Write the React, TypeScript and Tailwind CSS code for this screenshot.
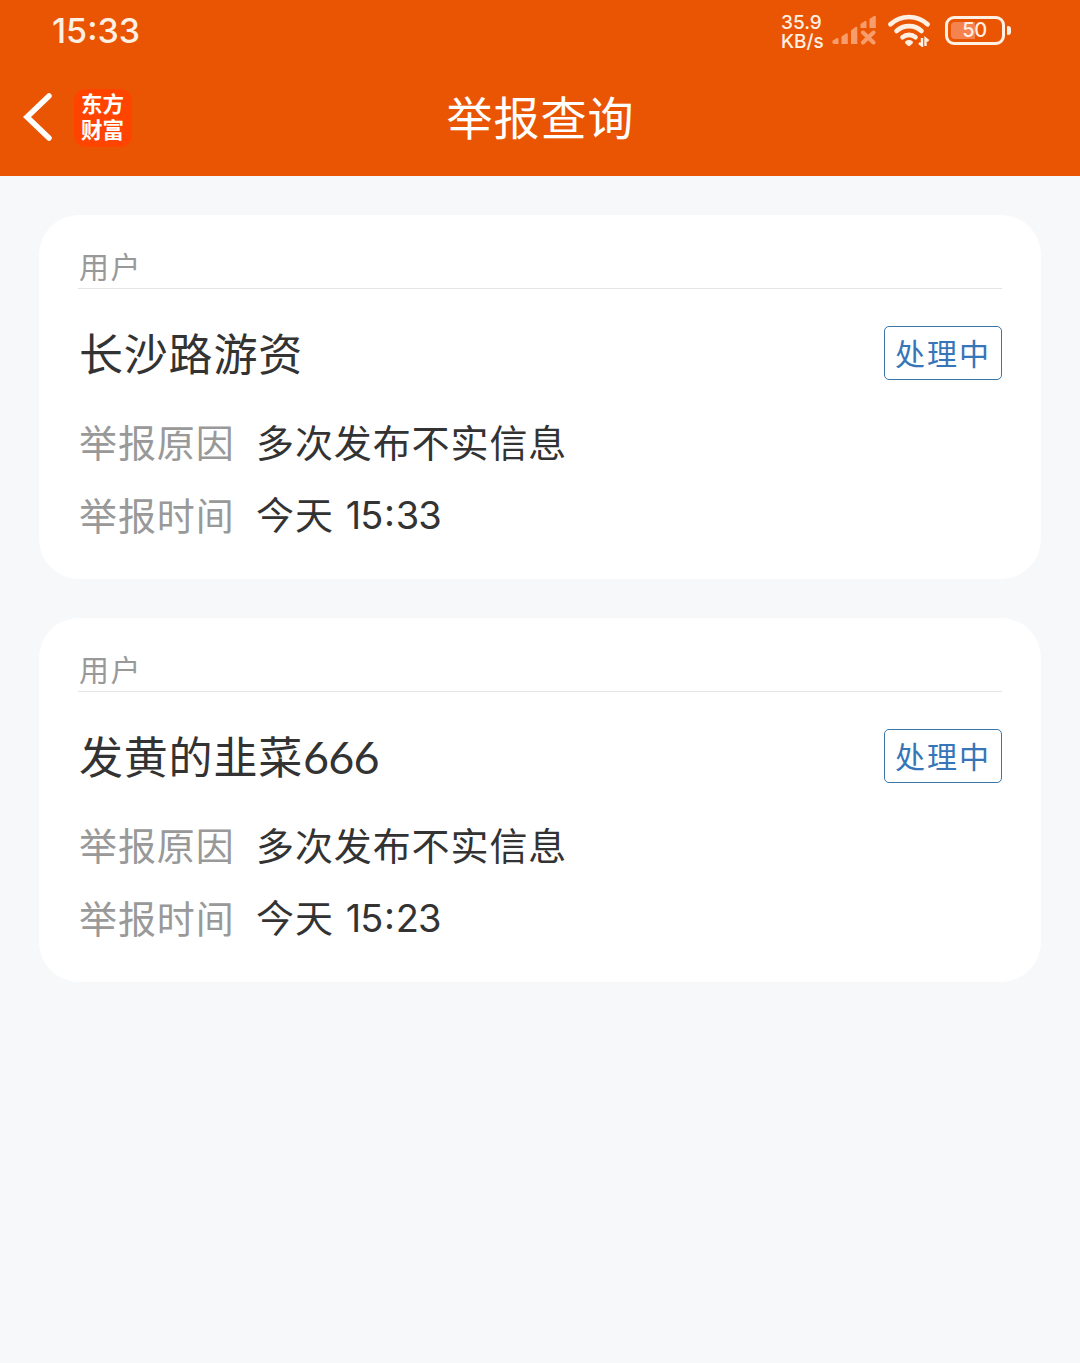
interface Report {
  id: number;
  type: string;
  name: string;
  status: string;
  reason: string;
  day: string;
  time: string;
}

const reports: Report[] = [
  {
    id: 1,
    type: "用户",
    name: "长沙路游资",
    status: "处理中",
    reason: "多次发布不实信息",
    day: "今天",
    time: "15:33",
  },
  {
    id: 2,
    type: "用户",
    name: "发黄的韭菜666",
    status: "处理中",
    reason: "多次发布不实信息",
    day: "今天",
    time: "15:23",
  },
];

function SignalIcon() {
  return (
    <svg width="46" height="32" viewBox="0 0 46 32" className="fill-[#f79d6b]">
      <path d="M3 26.500 7 24q1.500-.5 1.500 1v5H4a2 2 0 0 1-1-3.500z" />
      <path d="M11.500 22.500 16 19.500q1.800-.8 1.800 1V30h-6.300z" />
      <path d="M21 16.500 25.500 13q1.800-.8 1.800 1v16H21z" />
      <path d="M30.500 10 35 7q1.500-.5 1.500 1v6h-6z" />
      <path d="M39.500 5 44 2q1.800-.8 1.800 1v11h-6.300z" />
      <path
        d="m33 18.500 10.500 10m0-10L33 28.500"
        className="stroke-[#f79d6b]"
        strokeWidth="4"
        strokeLinecap="round"
      />
    </svg>
  );
}

function WifiIcon() {
  return (
    <svg width="44" height="34" viewBox="0 0 44 34" fill="none">
      <g className="stroke-[#fff0e4]" strokeWidth="4.600" strokeLinecap="round">
        <path d="M4.500 11.300a27 27 0 0 1 37 0" />
        <path d="M10.500 18a18.500 18.500 0 0 1 25 0" />
        <path d="M16.500 24.300a10 10 0 0 1 13 0" />
      </g>
      <path
        d="M19.500 28.300c2-1.800 5-1.800 7 0 .7.700.6 1.500 0 2.100l-2.500 2.300c-.6.600-1.400.6-2 0l-2.500-2.300c-.6-.6-.7-1.400 0-2.100z"
        className="fill-[#fff0e4]"
      />
      <path
        d="M36 25v7.500l-3-2.500M39.500 33v-7.500l3 2.500"
        className="stroke-[#fff0e4]"
        strokeWidth="2.400"
      />
    </svg>
  );
}

function Battery({ level }: { level: number }) {
  return (
    <div className="flex items-center">
      <div className="relative h-[29px] w-[60px] rounded-[9px] border-[3px] border-[#fff0e4] p-[3px]">
        <div
          className="h-full rounded-l-[4px] bg-[#f58350]"
          style={{ width: `${level}%` }}
        />
        <span className="absolute inset-0 flex items-center justify-center pb-px pr-px text-[20px] font-medium tracking-[-0.5px] leading-none">
          {level}
        </span>
      </div>
      <div className="ml-[2px] h-[9px] w-[4px] rounded-l-[1px] rounded-r-[3px] bg-[#fff0e4]" />
    </div>
  );
}

function StatusBar() {
  return (
    <div className="flex h-[60px] items-center justify-between pl-[52px] pr-[69px] font-['Inter',sans-serif] text-[#fff0e4]">
      <span className="pt-[2px] text-[34px] font-medium leading-none">15:33</span>
      <div className="flex items-center">
        <div className="flex w-[50px] flex-col gap-px pl-px pt-[4px] text-[19px] font-medium leading-[18px]">
          <span>35.9</span>
          <span>KB/s</span>
        </div>
        <SignalIcon />
        <div className="ml-[10px] mr-[15px]">
          <WifiIcon />
        </div>
        <Battery level={50} />
      </div>
    </div>
  );
}

function NavBar() {
  return (
    <div className="grid h-[116px] grid-cols-[1fr_auto_1fr] items-center text-white">
      <div className="flex items-center pl-[22px]">
        <svg width="32" height="50" viewBox="0 0 32 50" fill="none" className="-mt-[2px]">
          <path
            d="M27 4 5 25l22 21"
            stroke="currentColor"
            strokeWidth="5.500"
            strokeLinecap="round"
          />
        </svg>
        <div className="ml-5 flex size-[58px] flex-col items-center gap-[3px] rounded-[12px] bg-[#ff4400] pr-px pt-[2px] text-[21.500px] font-bold leading-[23px]">
          <span>东方</span>
          <span>财富</span>
        </div>
      </div>
      <h1 className="pb-[6px] pl-px text-[46px] leading-none tracking-[1px]">举报查询</h1>
    </div>
  );
}

function Row({ label, children }: { label: string; children: React.ReactNode }) {
  return (
    <div className="flex h-[73px] items-center text-[38px] leading-none tracking-[0.9px]">
      <span className="w-[177px] text-[#999999]">{label}</span>
      <span className="text-[#333333]">{children}</span>
    </div>
  );
}

function Time({ value }: { value: string }) {
  const [hours, minutes] = value.split(":");

  return (
    <span className="ml-[12px] font-['Inter',sans-serif] tracking-[-0.9px]">
      {hours}
      <span className="relative -top-[3px] mx-[1.500px]">:</span>
      {minutes}
    </span>
  );
}

function ReportCard({ report }: { report: Report }) {
  return (
    <div className="h-[364px] rounded-[40px] bg-white px-[39px] pt-[31px]">
      <div className="h-[43px] border-b border-[#e5e5e5] pl-px text-[30px] leading-[39px] tracking-[1.5px] text-[#999999]">
        {report.type}
      </div>
      <div className="mt-[37px] flex h-[54px] items-center justify-between">
        <h2 className="pl-px text-[44px] leading-none tracking-[0.8px] text-[#333333]">
          {report.name.replace(/\d+$/, "")}
          <span className="font-['Lato',sans-serif] text-[45px] tracking-[-0.8px]">
            {report.name.match(/\d+$/)?.[0]}
          </span>
        </h2>
        <span className="flex h-[54px] w-[118px] items-center justify-center rounded-[5px] border border-[#3a76a8] pb-[2px] text-[30px] leading-none tracking-[2px] text-[#3575b8]">
          {report.status}
        </span>
      </div>
      <div className="mt-[24px] pl-px">
        <Row label="举报原因">{report.reason}</Row>
        <Row label="举报时间">
          {report.day}
          <Time value={report.time} />
        </Row>
      </div>
    </div>
  );
}

export default function App() {
  return (
    <div className="h-[1363px] w-[1080px] overflow-hidden bg-[#f6f8fa] font-['Noto_Sans_CJK_SC',sans-serif]">
      <header className="h-[176px] bg-[#ea5504]">
        <StatusBar />
        <NavBar />
      </header>
      <main className="flex flex-col gap-[39px] px-[39px] pt-[39px]">
        {reports.map((report) => (
          <ReportCard key={report.id} report={report} />
        ))}
      </main>
    </div>
  );
}
